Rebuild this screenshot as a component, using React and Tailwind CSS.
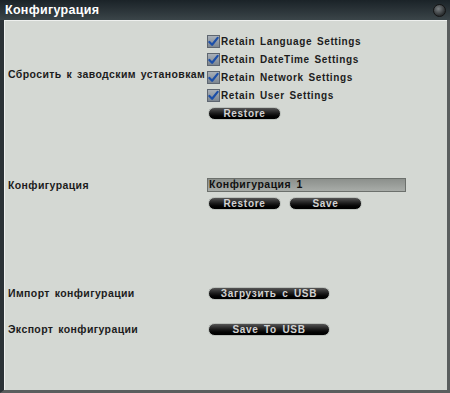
import React from 'react';

const font = { fontFamily: '"Liberation Sans", "DejaVu Sans", sans-serif' };

const Check = ({ label }) => (
  <div className="flex h-[18px] items-center">
    <div className="flex h-[13px] w-[13px] items-center justify-center border border-[#5e6670] bg-gradient-to-b from-[#a9b0b8] to-[#7d8690]">
      <svg viewBox="0 0 12 12" className="h-[11px] w-[11px]">
        <path d="M1.5 6.5 L4.5 9.5 L10.5 2" fill="none" stroke="#1c4fa8" strokeWidth="2.4" strokeLinecap="round" strokeLinejoin="round" />
      </svg>
    </div>
    <span className="ml-[1px] whitespace-nowrap text-[10px] font-bold tracking-[0.6px] [word-spacing:1.5px] text-[#1c1c1c]">{label}</span>
  </div>
);

const Btn = ({ children, w = 'w-[73px]' }) => (
  <div className={`${w} flex h-[13px] items-center justify-center rounded-full border border-[#b9beb9] bg-gradient-to-b from-[#555] via-[#1a1a1a] to-[#000] text-[10px] font-bold tracking-[0.7px] [word-spacing:2px] text-[#d2d2d2]`}>
    {children}
  </div>
);

const Label = ({ children, className = '' }) => (
  <div className={`w-[202px] shrink-0 whitespace-nowrap pl-[3px] text-[10.5px] font-bold tracking-[0.4px] [word-spacing:1.5px] text-[#1c1c1c] ${className}`}>{children}</div>
);

export default function App() {
  return (
    <div className="flex h-[393px] w-[450px] flex-col bg-[#2b3236]" style={font}>
      <div className="flex h-[20px] shrink-0 items-center justify-between bg-gradient-to-b from-[#1b2328] to-[#3b4549] pl-[5px] pr-[4px]">
        <span className="text-[12.5px] font-bold tracking-[0.3px] text-white">Конфигурация</span>
        <div className="h-[13px] w-[13px] rounded-full border border-[#141414] bg-[radial-gradient(circle_at_40%_35%,#7a7f82,#2a2d2f_70%)]" />
      </div>
      <div className="flex min-h-0 flex-1 border-b-[3px] border-l-[4px] border-r-[3px] border-b-[#5a5e5e] border-l-[#2b3236] border-r-[#5a5e5e]">
        <div className="flex flex-1 flex-col border-l border-t border-[#eef0ee] bg-[#d4d8d3]">
          <div className="mt-[11px] flex">
            <Label className="pt-[35px]">Сбросить к заводским установкам</Label>
            <div className="flex flex-col">
              <Check label="Retain Language Settings" />
              <Check label="Retain DateTime Settings" />
              <Check label="Retain Network Settings" />
              <Check label="Retain User Settings" />
              <div className="ml-[1px] mt-[3px]"><Btn>Restore</Btn></div>
            </div>
          </div>
          <div className="mt-[58px] flex">
            <Label>Конфигурация</Label>
            <div className="flex flex-col">
              <div className="flex h-[14px] w-[199px] items-center border border-[#6c706c] bg-gradient-to-b from-[#8c908c] to-[#a8aca8] pl-[1px] text-[10.5px] font-bold tracking-[0.5px] [word-spacing:2px] text-[#111]">Конфигурация 1</div>
              <div className="ml-[1px] mt-[5px] flex gap-[8px]">
                <Btn>Restore</Btn>
                <Btn>Save</Btn>
              </div>
            </div>
          </div>
          <div className="mt-[76px] flex items-center">
            <Label>Импорт конфигурации</Label>
            <div className="ml-[1px]"><Btn w="w-[122px]">Загрузить с USB</Btn></div>
          </div>
          <div className="mt-[20px] flex items-center">
            <Label>Экспорт конфигурации</Label>
            <div className="ml-[1px]"><Btn w="w-[122px]">Save To USB</Btn></div>
          </div>
        </div>
      </div>
    </div>
  );
}
